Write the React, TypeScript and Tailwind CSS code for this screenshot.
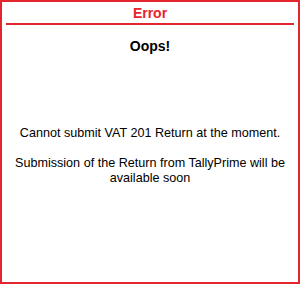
import React from 'react';

const App: React.FC = () => {
  return (
    <div className="w-[300px] h-[284px] bg-white border-2 border-[#e3262d] flex flex-col font-['Liberation_Sans',Arial,sans-serif] text-black">
      <div className="mx-1 h-[23px] border-b-2 border-[#e3262d] flex items-center justify-center">
        <h1 className="text-[14px] font-bold text-[#e8232b] leading-none">Error</h1>
      </div>
      <div className="flex flex-col items-center px-1">
        <h2 className="mt-[14px] text-[14px] font-bold leading-none">Oops!</h2>
        <p className="mt-[73px] text-[12.6px] leading-[15px] text-center">
          Cannot submit VAT 201 Return at the moment.
        </p>
        <p className="mt-[15px] text-[12.6px] leading-[15px] text-center">
          Submission of the Return from TallyPrime will be available soon
        </p>
      </div>
    </div>
  );
};

export default App;
